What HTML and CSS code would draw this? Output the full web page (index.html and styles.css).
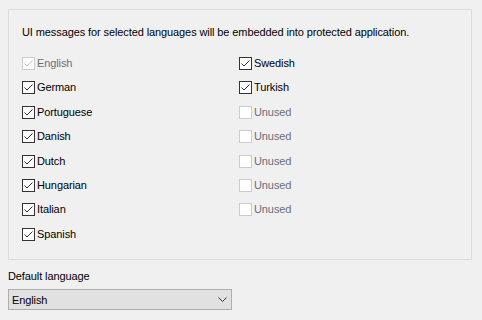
FILE: index.html
```html
<html>
    <head>
        <title>Languages</title>
        <link rel="stylesheet" href="styles.css">
    </head>
    <body>
        <div class="group">
            <p class="note">UI messages for selected languages will be embedded into protected application.</p>
            <div class="langs">
                <div class="col">
                    <div class="item disabled">
                        <svg class="box" width="13" height="13" viewBox="0 0 13 13"><rect x="0.5" y="0.5" width="12" height="12" fill="#fff" stroke="#cccccc"/><path d="M2.5 6.5 L5 9 L10.5 3.5" fill="none" stroke="#c4c4c4" stroke-width="1"/></svg>
                        <span>English</span>
                    </div>
                    <div class="item">
                        <svg class="box" width="13" height="13" viewBox="0 0 13 13"><rect x="0.5" y="0.5" width="12" height="12" fill="#fff" stroke="#333"/><path d="M2.5 6.5 L5 9 L10.5 3.5" fill="none" stroke="#333" stroke-width="1"/></svg>
                        <span>German</span>
                    </div>
                    <div class="item">
                        <svg class="box" width="13" height="13" viewBox="0 0 13 13"><rect x="0.5" y="0.5" width="12" height="12" fill="#fff" stroke="#333"/><path d="M2.5 6.5 L5 9 L10.5 3.5" fill="none" stroke="#333" stroke-width="1"/></svg>
                        <span>Portuguese</span>
                    </div>
                    <div class="item">
                        <svg class="box" width="13" height="13" viewBox="0 0 13 13"><rect x="0.5" y="0.5" width="12" height="12" fill="#fff" stroke="#333"/><path d="M2.5 6.5 L5 9 L10.5 3.5" fill="none" stroke="#333" stroke-width="1"/></svg>
                        <span>Danish</span>
                    </div>
                    <div class="item">
                        <svg class="box" width="13" height="13" viewBox="0 0 13 13"><rect x="0.5" y="0.5" width="12" height="12" fill="#fff" stroke="#333"/><path d="M2.5 6.5 L5 9 L10.5 3.5" fill="none" stroke="#333" stroke-width="1"/></svg>
                        <span>Dutch</span>
                    </div>
                    <div class="item">
                        <svg class="box" width="13" height="13" viewBox="0 0 13 13"><rect x="0.5" y="0.5" width="12" height="12" fill="#fff" stroke="#333"/><path d="M2.5 6.5 L5 9 L10.5 3.5" fill="none" stroke="#333" stroke-width="1"/></svg>
                        <span>Hungarian</span>
                    </div>
                    <div class="item">
                        <svg class="box" width="13" height="13" viewBox="0 0 13 13"><rect x="0.5" y="0.5" width="12" height="12" fill="#fff" stroke="#333"/><path d="M2.5 6.5 L5 9 L10.5 3.5" fill="none" stroke="#333" stroke-width="1"/></svg>
                        <span>Italian</span>
                    </div>
                    <div class="item">
                        <svg class="box" width="13" height="13" viewBox="0 0 13 13"><rect x="0.5" y="0.5" width="12" height="12" fill="#fff" stroke="#333"/><path d="M2.5 6.5 L5 9 L10.5 3.5" fill="none" stroke="#333" stroke-width="1"/></svg>
                        <span>Spanish</span>
                    </div>
                </div>
                <div class="col">
                    <div class="item">
                        <svg class="box" width="13" height="13" viewBox="0 0 13 13"><rect x="0.5" y="0.5" width="12" height="12" fill="#fff" stroke="#333"/><path d="M2.5 6.5 L5 9 L10.5 3.5" fill="none" stroke="#333" stroke-width="1"/></svg>
                        <span>Swedish</span>
                    </div>
                    <div class="item">
                        <svg class="box" width="13" height="13" viewBox="0 0 13 13"><rect x="0.5" y="0.5" width="12" height="12" fill="#fff" stroke="#333"/><path d="M2.5 6.5 L5 9 L10.5 3.5" fill="none" stroke="#333" stroke-width="1"/></svg>
                        <span>Turkish</span>
                    </div>
                    <div class="item disabled">
                        <svg class="box" width="13" height="13" viewBox="0 0 13 13"><rect x="0.5" y="0.5" width="12" height="12" fill="#fff" stroke="#cccccc"/></svg>
                        <span>Unused</span>
                    </div>
                    <div class="item disabled">
                        <svg class="box" width="13" height="13" viewBox="0 0 13 13"><rect x="0.5" y="0.5" width="12" height="12" fill="#fff" stroke="#cccccc"/></svg>
                        <span>Unused</span>
                    </div>
                    <div class="item disabled">
                        <svg class="box" width="13" height="13" viewBox="0 0 13 13"><rect x="0.5" y="0.5" width="12" height="12" fill="#fff" stroke="#cccccc"/></svg>
                        <span>Unused</span>
                    </div>
                    <div class="item disabled">
                        <svg class="box" width="13" height="13" viewBox="0 0 13 13"><rect x="0.5" y="0.5" width="12" height="12" fill="#fff" stroke="#cccccc"/></svg>
                        <span>Unused</span>
                    </div>
                    <div class="item disabled">
                        <svg class="box" width="13" height="13" viewBox="0 0 13 13"><rect x="0.5" y="0.5" width="12" height="12" fill="#fff" stroke="#cccccc"/></svg>
                        <span>Unused</span>
                    </div>
                </div>
            </div>
        </div>
        <div class="field-label">Default language</div>
        <div class="select">
            <span>English</span>
            <svg width="9" height="5" viewBox="0 0 9 5"><path d="M0.5 0.5 L4.5 4.5 L8.5 0.5" fill="none" stroke="#333" stroke-width="1"/></svg>
        </div>
    </body>
</html>
```

FILE: styles.css
```css
body {
    margin: 0;
    padding: 9px 0 0 8px;
    background-color: #f0f0f0;
    font-family: "Liberation Sans", Arial, sans-serif;
    font-size: 11px;
    letter-spacing: -0.1px;
    color: #000;
}
.group {
    box-sizing: border-box;
    width: 464px;
    height: 251px;
    border: 1px solid #dcdcdc;
    padding: 14px 13px 0 13px;
}
.note {
    margin: 0;
    line-height: 16px;
}
.langs {
    display: flex;
    margin-top: 17px;
}
.col {
    display: flex;
    flex-direction: column;
    gap: 11.4px;
}
.col:first-child {
    width: 217px;
}
.item {
    display: flex;
    align-items: center;
    gap: 2px;
    height: 13px;
    line-height: 13px;
}
.box {
    flex: none;
}
.item.disabled {
    color: #6d6d7a;
}
.field-label {
    margin-top: 8px;
    line-height: 16px;
}
.select {
    box-sizing: border-box;
    display: flex;
    align-items: center;
    justify-content: space-between;
    width: 224px;
    height: 21px;
    margin-top: 5px;
    padding: 0 4px 0 3px;
    background-color: #e1e1e1;
    border: 1px solid #adadad;
}
```
